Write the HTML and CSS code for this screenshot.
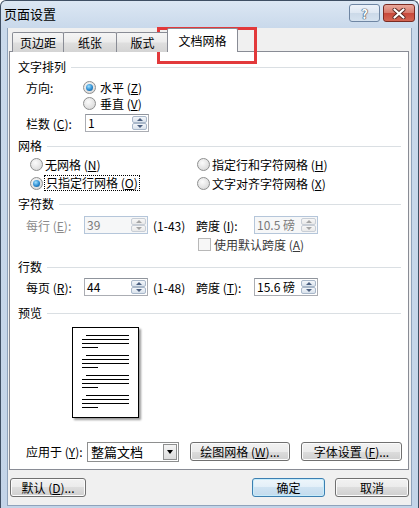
FILE: index.html
```html
<!DOCTYPE html>
<html lang="zh-CN">
<head>
    <meta charset="UTF-8">
    <meta name="viewport" content="width=device-width, initial-scale=1.0">
    <title>页面设置</title>
    <link rel="stylesheet" href="styles.css">
</head>
<body>
<div class="window">
    <div class="titlebar">
        <span class="title">页面设置</span>
        <div class="caption-btns">
            <span class="cap-btn help">?</span>
            <span class="cap-btn close">
                <svg width="14" height="11" viewBox="0 0 14 11">
                    <path d="M2.5 1.5 L11.5 9.5 M11.5 1.5 L2.5 9.5" stroke="#5a2a24" stroke-width="4" stroke-linecap="round"/>
                    <path d="M2.5 1.5 L11.5 9.5 M11.5 1.5 L2.5 9.5" stroke="#fff" stroke-width="2.2" stroke-linecap="round"/>
                </svg>
            </span>
        </div>
    </div>

    <div class="client">
        <div class="tabs">
            <span class="tab t1">页边距</span>
            <span class="tab t2">纸张</span>
            <span class="tab t3">版式</span>
            <span class="tab active">文档网格</span>
        </div>

        <div class="panel">
            <!-- 文字排列 -->
            <div class="group-title">文字排列</div>
            <div class="row r-dir">
                <span class="label w57">方向:</span>
                <span class="radio checked"></span>
                <span>水平 (<u>Z</u>)</span>
            </div>
            <div class="row r-vert">
                <span class="radio"></span>
                <span>垂直 (<u>V</u>)</span>
            </div>
            <div class="row r-spin r-cols">
                <span class="label w59">栏数 (<u>C</u>):</span>
                <span class="spin"><span class="val">1</span><span class="arrows"><i class="up"></i><i class="down"></i></span></span>
            </div>

            <!-- 网格 -->
            <div class="group-title gt-grid">网格</div>
            <div class="opts">
                <div class="opt"><span class="radio"></span><span>无网格 (<u>N</u>)</span></div>
                <div class="opt"><span class="radio"></span><span>指定行和字符网格 (<u>H</u>)</span></div>
                <div class="opt"><span class="radio checked"></span><span class="focus">只指定行网格 (<u>O</u>)</span></div>
                <div class="opt"><span class="radio"></span><span>文字对齐字符网格 (<u>X</u>)</span></div>
            </div>

            <!-- 字符数 -->
            <div class="group-title gt-chars">字符数</div>
            <div class="row r-spin r-chars">
                <span class="label w58 muted">每行 (<u>E</u>):</span>
                <span class="spin disabled"><span class="val">39</span><span class="arrows"><i class="up"></i><i class="down"></i></span></span>
                <span class="range">(1-43)</span>
                <span class="label w58">跨度 (<u>I</u>):</span>
                <span class="spin disabled"><span class="val">10.5 磅</span><span class="arrows"><i class="up"></i><i class="down"></i></span></span>
            </div>
            <div class="row r-check">
                <span class="checkbox"></span>
                <span class="muted-dark">使用默认跨度 (<u>A</u>)</span>
            </div>

            <!-- 行数 -->
            <div class="group-title gt-lines">行数</div>
            <div class="row r-spin r-lines">
                <span class="label w58">每页 (<u>R</u>):</span>
                <span class="spin"><span class="val">44</span><span class="arrows"><i class="up"></i><i class="down"></i></span></span>
                <span class="range">(1-48)</span>
                <span class="label w58">跨度 (<u>T</u>):</span>
                <span class="spin"><span class="val">15.6 磅</span><span class="arrows"><i class="up"></i><i class="down"></i></span></span>
            </div>

            <!-- 预览 -->
            <div class="group-title gt-preview">预览</div>
            <div class="page">
                <div class="para"><i class="first"></i><i></i><i></i><i class="last"></i></div>
                <div class="para"><i class="first"></i><i></i><i></i><i class="last"></i></div>
                <div class="para"><i class="first"></i><i></i><i></i><i class="last"></i></div>
                <div class="para"><i class="first"></i><i></i><i></i><i class="last"></i></div>
            </div>

            <div class="row r-apply">
                <span class="label w61">应用于 (<u>Y</u>):</span>
                <span class="select"><span class="val">整篇文档</span><span class="drop"></span></span>
                <span class="btn b-draw">绘图网格 (<u>W</u>)...</span>
                <span class="btn b-font">字体设置 (<u>F</u>)...</span>
            </div>
        </div>

        <div class="footer">
            <span class="btn b-default">默认 (<u>D</u>)...</span>
            <span class="btn primary b-ok">确定</span>
            <span class="btn b-cancel">取消</span>
        </div>
    </div>

    <div class="callout"></div>
</div>
</body>
</html>
```

FILE: styles.css
```css
* {
    box-sizing: border-box;
}

body {
    margin: 0;
    background: #fff;
    font-family: "Noto Sans CJK SC", "Liberation Sans", sans-serif;
    font-size: 12px;
    color: #000;
}

u {
    text-decoration: underline;
    text-underline-offset: 1px;
}

/* window frame */
.window {
    position: relative;
    width: 419px;
    height: 508px;
    border: 1px solid #3f4f63;
    border-bottom: 0;
    border-radius: 6px 6px 0 0;
    background: linear-gradient(#dce7f3, #c9d9eb 27px, #c3d4e8);
    overflow: hidden;
}

.titlebar {
    display: flex;
    height: 27px;
    padding-left: 3px;
}

.title {
    font-size: 13px;
    line-height: 25px;
    color: #000;
}

.caption-btns {
    display: flex;
    gap: 3px;
    margin-left: auto;
    margin-right: 3px;
    margin-top: 3px;
}

.cap-btn {
    display: flex;
    align-items: center;
    justify-content: center;
    height: 18px;
    border: 1px solid #6f86a3;
    border-radius: 3px;
}

.help {
    width: 31px;
    background: linear-gradient(#eef3f9, #dde7f2 50%, #cbd9e8 50%, #d5e2ef);
    color: #fff;
    font-weight: bold;
    font-size: 13px;
    text-shadow: 0 0 1px #2f3f55, 0 0 1px #2f3f55, 0 0 1px #2f3f55;
}

.close {
    width: 32px;
    border-color: #7a2b22;
    background: linear-gradient(#e9a99c, #d7786a 50%, #c7473a 50%, #d36552);
}

.client {
    height: 478px;
    margin: 0 6px;
    border: 1px solid #8fa3bb;
    border-top: 0;
    background: #f0f0f0;
}

/* tabs */
.tabs {
    position: relative;
    z-index: 1;
    display: flex;
    align-items: flex-end;
    height: 24px;
    padding-left: 4px;
    margin-bottom: -1px;
}

.tab {
    height: 20px;
    padding-top: 2px;
    margin-right: -1px;
    border: 1px solid #898c95;
    border-bottom: 0;
    border-radius: 2px 2px 0 0;
    background: linear-gradient(#f5f5f5, #ececec 45%, #dedede 55%, #d4d4d4);
    line-height: 16px;
    text-align: center;
}

.t1 { width: 52px; }
.t2 { width: 54px; }
.t3 { width: 53px; }

.tab.active {
    width: 71px;
    height: 24px;
    padding-top: 4px;
    margin-left: -1px;
    background: #fff;
}

/* tab page */
.panel {
    height: 419px;
    margin-left: 1px;
    width: 400px;
    padding: 7px 7px 0 8px;
    border: 1px solid #898c95;
    background: #fff;
}

.group-title {
    display: flex;
    align-items: center;
    height: 16px;
    line-height: 16px;
}

.group-title::after {
    content: "";
    flex: 1;
    height: 1px;
    margin-left: 5px;
    background: #dadfe3;
}

.gt-grid { margin-top: 6px; }
.gt-chars { margin-top: 5px; }
.gt-lines { margin-top: 7px; }
.gt-preview { margin-top: 9px; }

.row {
    display: flex;
    align-items: center;
    height: 16px;
    padding-left: 8px;
    white-space: nowrap;
}

.r-spin { height: 18px; }
.r-dir { margin-top: 4px; }
.r-vert { padding-left: 65px; }
.r-cols { margin-top: 3px; }
.r-chars { margin-top: 4px; }
.r-check { margin-top: 2px; padding-left: 180px; }
.r-lines { margin-top: 3px; }

.label { flex: none; }
.w57 { width: 57px; }
.w58 { width: 58px; }
.w59 { width: 59px; }
.w61 { width: 61px; }

.muted { color: #8a8a8a; }
.muted-dark { color: #3a3a3a; }

/* radio / checkbox */
.radio {
    position: relative;
    flex: none;
    width: 13px;
    height: 13px;
    margin-right: 4px;
    border: 1px solid #8e8f8f;
    border-radius: 50%;
    background: radial-gradient(circle at 40% 35%, #fbfbfb, #e2e2e2 60%, #cfcfcf);
}

.radio.checked::after {
    content: "";
    position: absolute;
    left: 2px;
    top: 2px;
    width: 7px;
    height: 7px;
    border-radius: 50%;
    background: radial-gradient(circle at 40% 35%, #9fe0ff, #2a8ad0 55%, #124f80);
}

.checkbox {
    flex: none;
    width: 13px;
    height: 13px;
    margin-right: 3px;
    border: 1px solid #b8b8b8;
    background: #f7f7f7;
}

.opts {
    display: grid;
    grid-template-columns: 167px 1fr;
    row-gap: 3px;
    margin-top: 2px;
    padding-left: 12px;
}

.opt {
    display: flex;
    align-items: center;
    height: 16px;
    white-space: nowrap;
}

.opt .radio { margin-right: 2px; }

.focus {
    padding: 0 1px;
    line-height: 14px;
    outline: 1px dotted #000;
}

/* spin box */
.spin {
    display: flex;
    flex: none;
    width: 64px;
    height: 18px;
    border: 1px solid #abadb3;
    border-top-color: #8f949c;
    background: #fff;
}

.spin .val {
    flex: 1;
    padding-left: 2px;
    line-height: 16px;
}

.spin .arrows {
    display: flex;
    flex-direction: column;
    width: 16px;
    padding: 1px 1px 1px 0;
}

.spin i {
    flex: 1;
    display: flex;
    align-items: center;
    justify-content: center;
    border: 1px solid #a8b7c9;
    border-radius: 2px;
    background: linear-gradient(#f3f6fa, #d9e2ec);
}

.spin i::after {
    content: "";
    border: 3px solid transparent;
}

.spin i.up::after {
    border-bottom: 3px solid #4a5f80;
    margin-top: -3px;
}

.spin i.down::after {
    border-top: 3px solid #4a5f80;
    margin-bottom: -3px;
}

.spin.disabled {
    border-color: #b5c6da;
    background: #f6f7f8;
    color: #7a7a7a;
}

.spin.disabled i {
    border-color: #c8ced6;
    background: linear-gradient(#f7f7f7, #e9e9e9);
}

.spin.disabled i.up::after { border-bottom-color: #a5a5a5; }
.spin.disabled i.down::after { border-top-color: #a5a5a5; }

.range {
    width: 43px;
    margin-left: 5px;
    flex: none;
}

/* preview */
.page {
    width: 67px;
    height: 91px;
    margin: 6px 0 0 54px;
    padding: 7px 9px 0;
    border: 1px solid #000;
    background: #fff;
    box-shadow: 2px 2px 2px #9a9a9a;
}

.para {
    display: flex;
    flex-direction: column;
    gap: 3px;
    margin-bottom: 7px;
}

.para i {
    height: 1px;
    width: 47px;
    background: #000;
}

.para i.first {
    width: 43px;
    margin-left: 4px;
}

.para i.last { width: 16px; }

/* apply row */
.r-apply {
    height: 21px;
    margin-top: 23px;
}

.select {
    display: flex;
    flex: none;
    width: 92px;
    height: 20px;
    padding: 1px;
    border: 1px solid #8e8f8f;
    background: #fff;
    margin-right: 11px;
}

.select .val {
    flex: 1;
    padding-left: 2px;
    font-size: 13px;
    line-height: 16px;
}

.select .drop {
    display: flex;
    align-items: center;
    justify-content: center;
    width: 14px;
    border: 1px solid #8e8f8f;
    background: linear-gradient(#f4f4f4, #dcdcdc);
}

.select .drop::after {
    content: "";
    border: 3px solid transparent;
    border-top: 4px solid #000;
    margin-top: 4px;
}

/* buttons */
.btn {
    display: flex;
    flex: none;
    align-items: center;
    justify-content: center;
    height: 19px;
    border: 1px solid #707070;
    border-radius: 3px;
    background: linear-gradient(#f2f2f2, #ebebeb 50%, #dddddd 50%, #cfcfcf);
    box-shadow: inset 0 0 0 1px #fbfbfb;
    white-space: nowrap;
}

.b-draw { width: 100px; margin-right: 11px; }
.b-font { width: 101px; }

.btn.primary {
    border-color: #3c7fb1;
    background: linear-gradient(#eef6fb, #e2eff8 50%, #cfe3f2 50%, #c3dbed);
    box-shadow: inset 0 0 0 1px #c7ecfb;
}

.footer {
    display: flex;
    margin-top: 8px;
    padding-left: 2px;
}

.b-default { width: 76px; }
.b-ok { width: 73px; margin-left: auto; }
.b-cancel { width: 74px; margin-left: 10px; margin-right: 2px; }

/* red annotation box over the active tab */
.callout {
    position: absolute;
    left: 156px;
    top: 26px;
    width: 100px;
    height: 37px;
    border: 3px solid #e2393b;
}
```
